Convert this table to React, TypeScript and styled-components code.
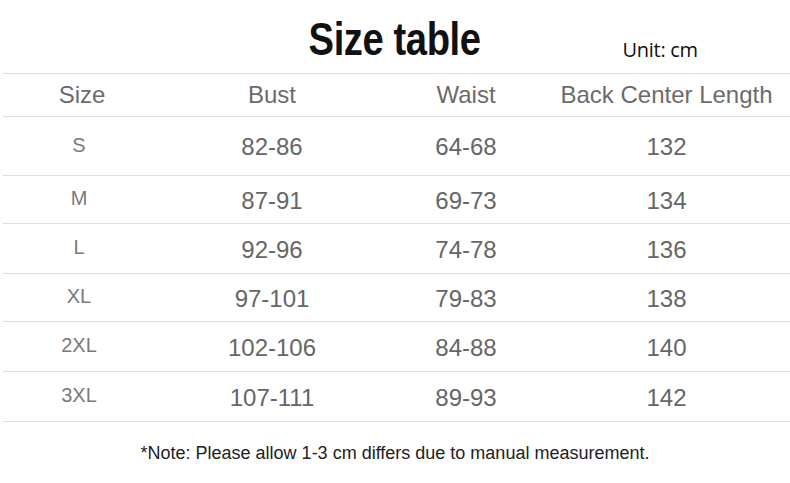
import React from 'react'
import styled, { createGlobalStyle } from 'styled-components'

const GlobalStyle = createGlobalStyle`
  html, body {
    margin: 0;
    padding: 0;
    background: #ffffff;
  }
`

type Row = { size: string; bust: string; waist: string; length: string; height: number }

const rows: Row[] = [
  { size: 'S', bust: '82-86', waist: '64-68', length: '132', height: 58 },
  { size: 'M', bust: '87-91', waist: '69-73', length: '134', height: 47 },
  { size: 'L', bust: '92-96', waist: '74-78', length: '136', height: 49 },
  { size: 'XL', bust: '97-101', waist: '79-83', length: '138', height: 47 },
  { size: '2XL', bust: '102-106', waist: '84-88', length: '140', height: 49 },
  { size: '3XL', bust: '107-111', waist: '89-93', length: '142', height: 49 },
]

const App = () => {
  return (
    <Page>
      <GlobalStyle />
      <TitleBar>
        <span />
        <Title>Size table</Title>
        <Unit>Unit: cm</Unit>
      </TitleBar>
      <Table>
        <HeadRow>
          <HeadCell $offset={6}>Size</HeadCell>
          <HeadCell>Bust</HeadCell>
          <HeadCell>Waist</HeadCell>
          <HeadCell>Back Center Length</HeadCell>
        </HeadRow>
        {rows.map((r) => (
          <DataRow key={r.size} $height={r.height}>
            <SizeCell>{r.size}</SizeCell>
            <NumCell>{r.bust}</NumCell>
            <NumCell>{r.waist}</NumCell>
            <NumCell>{r.length}</NumCell>
          </DataRow>
        ))}
      </Table>
      <Note>*Note: Please allow 1-3 cm differs due to manual measurement.</Note>
    </Page>
  )
}

const Page = styled.div`
  width: 790px;
  height: 483px;
  background: #ffffff;
  overflow: hidden;
`

const TitleBar = styled.div`
  display: grid;
  grid-template-columns: 1fr auto 1fr;
  align-items: end;
  height: 73px;
  box-sizing: border-box;
  padding-bottom: 11px;
`

const Title = styled.h1`
  margin: 0;
  font-family: 'Liberation Sans', Arial, sans-serif;
  font-weight: 700;
  font-size: 46px;
  line-height: 1;
  letter-spacing: -0.5px;
  color: #111111;
  transform: scaleX(0.83);
`

const Unit = styled.div`
  margin-left: 124px;
  padding-bottom: 2px;
  font-family: 'Open Sans', sans-serif;
  font-size: 20px;
  line-height: 1;
  letter-spacing: -0.3px;
  color: #111111;
`

const Table = styled.div`
  margin-left: 3px;
  border-bottom: 1px solid #dddddd;
`

const Columns = styled.div`
  display: grid;
  grid-template-columns: 152px 234px 154px 1fr;
  align-items: center;
  justify-items: center;
  border-top: 1px solid #dddddd;
`

const HeadRow = styled(Columns)`
  height: 42px;
`

const DataRow = styled(Columns)<{ $height: number }>`
  height: ${(p) => p.$height}px;
`

const HeadCell = styled.div<{ $offset?: number }>`
  margin-left: ${(p) => p.$offset ?? 0}px;
  font-family: 'Liberation Sans', Arial, sans-serif;
  font-size: 24px;
  color: #6b6b6b;
`

const SizeCell = styled.div`
  font-family: 'Liberation Sans', Arial, sans-serif;
  font-size: 20px;
  color: #7a7a7a;
  margin-top: -2px;
`

const NumCell = styled.div`
  font-family: 'Liberation Sans', Arial, sans-serif;
  font-size: 24px;
  color: #666666;
  margin-top: 2px;
`

const Note = styled.p`
  margin: 21px 0 0;
  text-align: center;
  font-family: 'Liberation Sans', Arial, sans-serif;
  font-size: 18px;
  color: #222222;
`

export default App
